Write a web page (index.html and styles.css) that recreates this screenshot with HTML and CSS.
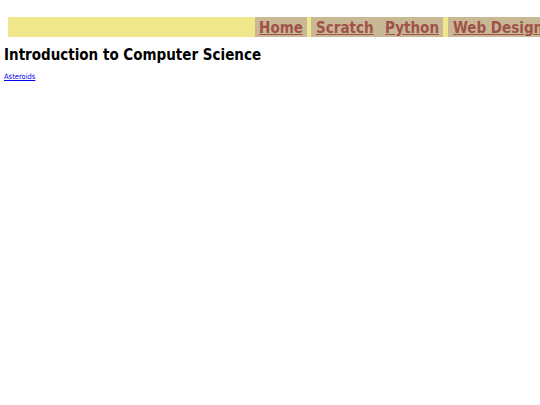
FILE: index.html
```html
<!DOCTYPE html>
<html>
<head>
<meta charset="utf-8">
<link rel="stylesheet" href="styles.css">
</head>
<body>
<div class="bar">
  <div class="spacer"></div>
  <a class="tab tab-home" href="#">Home</a>
  <div class="tab tab-mid"><a href="#">Scratch</a><a href="#">Python</a></div>
  <a class="tab tab-web" href="#">Web Design</a>
</div>
<h1 class="title">Introduction to Computer Science</h1>
<a class="small-link" href="#">Asteroids</a>
</body>
</html>
```
FILE: styles.css
```css
html, body { margin: 0; padding: 0; background: #fff; }
body { font-family: "DejaVu Sans Condensed", "DejaVu Sans", sans-serif; width: 540px; overflow: hidden; }
.bar {
  margin: 17px 0 0 8px;
  height: 20px;
  background: #f0e68c;
  display: flex;
  align-items: stretch;
  overflow: hidden;
  white-space: nowrap;
}
.spacer { width: 247px; flex: none; }
.tab, .tab-mid { background: #c9b896; flex: none; display: flex; align-items: center; padding-top: 2px; box-sizing: border-box; }
.tab, .tab a {
  color: #a0524a;
  font-weight: bold;
  font-size: 15px;
  text-decoration: underline;
}
.tab-home { width: 52px; justify-content: center; }
.tab-mid { margin-left: 4px; width: 132px; padding-left: 5px; padding-right: 4px; justify-content: space-between; }
.tab-web { margin-left: 5px; padding-left: 5px; }
.title {
  font-size: 15px;
  font-weight: bold;
  margin: 9px 0 0 4px;
  color: #000;
}
.small-link {
  display: block;
  margin: 8px 0 0 4px;
  font-size: 7.5px;
  color: #0000ee;
}
```
